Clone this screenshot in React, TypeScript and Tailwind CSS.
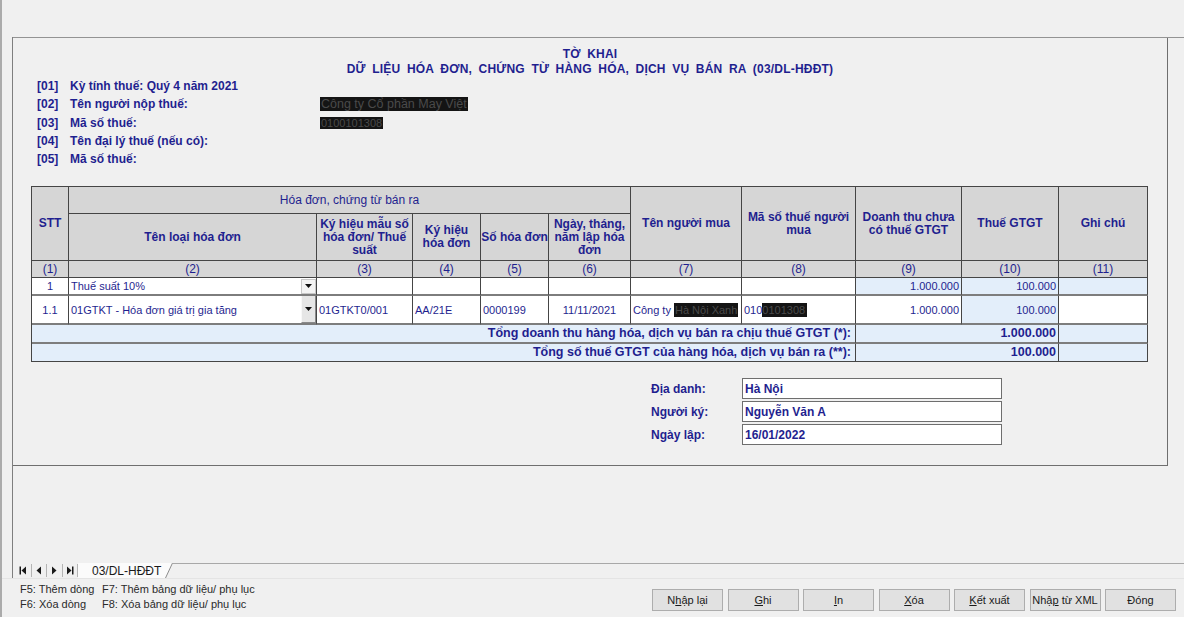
import type { ReactNode } from "react";

const font = "font-['Liberation_Sans',Arial,sans-serif]";

function Redacted({ children, className = "" }: { children: ReactNode; className?: string }) {
  return <span className={`bg-[#141414] text-[#4a4a4a] ${className}`}>{children}</span>;
}

const info: [string, string, ReactNode][] = [
  ["[01]", "Kỳ tính thuế: Quý 4 năm 2021", null],
  [
    "[02]",
    "Tên người nộp thuế:",
    <Redacted className="inline-block h-[14px] leading-[14px] px-[1px] font-normal text-[12.5px]">Công ty Cổ phần May Việt</Redacted>,
  ],
  [
    "[03]",
    "Mã số thuế:",
    <Redacted className="inline-block h-[12px] leading-[12px] text-[11px] font-normal px-[1px]">0100101308</Redacted>,
  ],
  ["[04]", "Tên đại lý thuế (nếu có):", null],
  ["[05]", "Mã số thuế:", null],
];

const base = "border-r border-b border-[#454545] flex items-center overflow-hidden";
const cell = `${base} whitespace-nowrap`;
const head = `${base} bg-[#d6d6d6] justify-center text-center font-bold text-[12px] leading-[13px] px-[2px]`;
const num = `${cell} bg-[#d6d6d6] justify-center`;
const white = `${cell} bg-white`;
const blue = `${cell} bg-[#e3eefa]`;
const rowLine = "border-b-[#7d7d7d] border-b-2";

function Caret() {
  return (
    <svg width="7" height="4" viewBox="0 0 7 4">
      <polygon points="0,0 7,0 3.5,4" fill="#111" />
    </svg>
  );
}

function Dropdown({ tall }: { tall?: boolean }) {
  return (
    <div
      className={`ml-auto w-[15px] shrink-0 flex items-center justify-center ${
        tall
          ? "self-stretch bg-[#e6e6e6] border-l border-[#f8f8f8] border-r border-b border-r-[#8a8a8a] border-b-[#8a8a8a]"
          : "h-[15px] bg-[#f4f4f4] border border-[#c8c8c8]"
      }`}
    >
      <Caret />
    </div>
  );
}

function InvoiceTable() {
  return (
    <div className="ml-[18px] w-[1117px] grid grid-cols-[37px_248px_96px_68px_68px_82px_111px_114px_106px_97px_89px] grid-rows-[27px_47px_17px_18px_29px_19px_18px] border-l border-t border-[#454545] text-[11px] text-[#1f1f8f]">
      <div className={`${head} row-span-2`}>STT</div>
      <div className={`${head} col-span-5 font-normal`}>Hóa đơn, chứng từ bán ra</div>
      <div className={`${head} row-span-2`}>Tên người mua</div>
      <div className={`${head} row-span-2 px-[4px]`}>Mã số thuế người mua</div>
      <div className={`${head} row-span-2 px-[6px]`}>Doanh thu chưa có thuế GTGT</div>
      <div className={`${head} row-span-2`}>Thuế GTGT</div>
      <div className={`${head} row-span-2`}>Ghi chú</div>
      <div className={head}>Tên loại hóa đơn</div>
      <div className={head}>Ký hiệu mẫu số hóa đơn/ Thuế suất</div>
      <div className={`${head} px-[6px]`}>Ký hiệu hóa đơn</div>
      <div className={`${head} px-0 whitespace-nowrap`}>Số hóa đơn</div>
      <div className={head}>Ngày, tháng, năm lập hóa đơn</div>

      {["(1)", "(2)", "(3)", "(4)", "(5)", "(6)", "(7)", "(8)", "(9)", "(10)", "(11)"].map((n) => (
        <div key={n} className={`${num} text-[12px]`}>
          {n}
        </div>
      ))}

      <div className={`${white} ${rowLine} justify-center`}>1</div>
      <div className={`${white} ${rowLine} pl-[2px]`}>
        <span>Thuế suất 10%</span>
        <Dropdown />
      </div>
      {[0, 1, 2, 3, 4, 5].map((i) => (
        <div key={i} className={`${white} ${rowLine}`} />
      ))}
      <div className={`${blue} ${rowLine} justify-end pr-[2px]`}>1.000.000</div>
      <div className={`${blue} ${rowLine} justify-end pr-[2px]`}>100.000</div>
      <div className={`${blue} ${rowLine}`} />

      <div className={`${white} ${rowLine} justify-center`}>1.1</div>
      <div className={`${white} ${rowLine} pl-[2px]`}>
        <span>01GTKT - Hóa đơn giá trị gia tăng</span>
        <Dropdown tall />
      </div>
      <div className={`${white} ${rowLine} pl-[2px]`}>01GTKT0/001</div>
      <div className={`${white} ${rowLine} pl-[2px]`}>AA/21E</div>
      <div className={`${white} ${rowLine} pl-[2px]`}>0000199</div>
      <div className={`${white} ${rowLine} justify-center`}>11/11/2021</div>
      <div className={`${white} ${rowLine} pl-[2px]`}>
        <span>Công ty&nbsp;</span>
        <Redacted className="px-[1px] leading-[14px]">Hà Nội Xanh</Redacted>
      </div>
      <div className={`${white} ${rowLine} pl-[2px]`}>
        <span>010</span>
        <Redacted className="leading-[14px] pr-[2px]">0101308</Redacted>
      </div>
      <div className={`${white} ${rowLine} justify-end pr-[2px]`}>1.000.000</div>
      <div className={`${blue} ${rowLine} justify-end pr-[2px]`}>100.000</div>
      <div className={`${white} ${rowLine}`} />

      <div className={`${blue} ${rowLine} col-span-8 justify-end pr-[4px] font-bold text-[12.5px]`}>
        Tổng doanh thu hàng hóa, dịch vụ bán ra chịu thuế GTGT (*):
      </div>
      <div className={`${blue} ${rowLine} col-span-2 justify-end pr-[2px] font-bold text-[12.5px]`}>1.000.000</div>
      <div className={`${blue} ${rowLine}`} />

      <div className={`${blue} col-span-8 justify-end pr-[4px] font-bold text-[12.5px]`}>
        Tổng số thuế GTGT của hàng hóa, dịch vụ bán ra (**):
      </div>
      <div className={`${blue} col-span-2 justify-end pr-[2px] font-bold text-[12.5px]`}>100.000</div>
      <div className={blue} />
    </div>
  );
}

function Signature() {
  const rows = [
    ["Địa danh:", "Hà Nội"],
    ["Người ký:", "Nguyễn Văn A"],
    ["Ngày lập:", "16/01/2022"],
  ];
  return (
    <div className="mt-[16px] ml-[638px] flex flex-col gap-[2px] text-[12px] text-[#1f1f8f]">
      {rows.map(([label, value]) => (
        <div key={label} className="flex items-center h-[21px]">
          <span className="w-[91px] font-bold">{label}</span>
          <div className="w-[260px] h-[21px] bg-white border border-[#6e6e6e] flex items-center pl-[2px] font-bold">
            {value}
          </div>
        </div>
      ))}
    </div>
  );
}

function NavIcon({ kind }: { kind: "first" | "prev" | "next" | "last" }) {
  return (
    <svg width="8" height="9" viewBox="0 0 8 9">
      {kind === "first" && (
        <>
          <rect x="0.5" y="0.5" width="1.5" height="8" fill="#1a1a1a" />
          <polygon points="7,0.5 2.5,4.5 7,8.5" fill="#1a1a1a" />
        </>
      )}
      {kind === "prev" && <polygon points="6,0.5 1.5,4.5 6,8.5" fill="#1a1a1a" />}
      {kind === "next" && <polygon points="2,0.5 6.5,4.5 2,8.5" fill="#1a1a1a" />}
      {kind === "last" && (
        <>
          <polygon points="1,0.5 5.5,4.5 1,8.5" fill="#1a1a1a" />
          <rect x="6" y="0.5" width="1.5" height="8" fill="#1a1a1a" />
        </>
      )}
    </svg>
  );
}

function TabStrip() {
  const kinds = ["first", "prev", "next", "last"] as const;
  return (
    <div className="h-[15px] flex">
      <div className="flex items-center pl-[3px] w-[65px]">
        {kinds.map((k) => (
          <div key={k} className="w-[16px] h-[13px] flex items-center justify-center border-r border-[#b4b4b4]">
            <NavIcon kind={k} />
          </div>
        ))}
      </div>
      <div className="w-[87px] bg-[#fbfbfb] flex items-center pl-[14px] text-[12px] text-[#1a1a1a] leading-none">
        03/DL-HĐĐT
      </div>
      <svg width="8" height="15" viewBox="0 0 8 15" className="shrink-0">
        <polygon points="0,0 7.5,0 0.5,15 0,15" fill="#fbfbfb" />
        <line x1="7.5" y1="0" x2="0.5" y2="15" stroke="#8c8c8c" strokeWidth="1" />
      </svg>
      <div className="flex-1 border-t border-[#a8a8a8]" />
    </div>
  );
}

const buttons: ReactNode[] = [
  <>N<u>h</u>ập lại</>,
  <><u>G</u>hi</>,
  <><u>I</u>n</>,
  <><u>X</u>óa</>,
  <><u>K</u>ết xuất</>,
  <>Nhậ<u>p</u> từ XML</>,
  <>Đón<u>g</u></>,
];

export default function App() {
  return (
    <div className={`w-[1184px] h-[617px] bg-[#f0f0f0] border-l-2 border-[#ababab] flex flex-col overflow-hidden ${font}`}>
      <div className="h-[37px] shrink-0" />
      <div className="flex-1 ml-[10px] border-l border-[#7f7f7f] flex flex-col">
        <div className="border-t border-[#939393]">
          <div className="w-[1155px] h-[428px] border-r border-b border-[#6f6f6f] flex flex-col text-[#1f1f8f]">
            <div className="pt-[9px] text-center font-bold text-[12px] leading-[15px] tracking-[0.2px] [word-spacing:3px]">
              <div>TỜ KHAI</div>
              <div>DỮ LIỆU HÓA ĐƠN, CHỨNG TỪ HÀNG HÓA, DỊCH VỤ BÁN RA (03/DL-HĐĐT)</div>
            </div>
            <div className="pl-[24px] text-[12px] font-bold">
              {info.map(([code, label, value]) => (
                <div key={code} className="h-[18.25px] flex items-center">
                  <span className="w-[33px]">{code}</span>
                  <span className="w-[250px]">{label}</span>
                  {value}
                </div>
              ))}
            </div>
            <div className="mt-[18px]">
              <InvoiceTable />
            </div>
            <Signature />
          </div>
        </div>
        <div className="flex-1" />
        <TabStrip />
      </div>
      <div className="h-[39px] shrink-0 flex border-t border-[#e4e4e4] text-[11px] text-[#2a2a2a]">
        <div className="pl-[18px] pt-[3px] flex leading-[15px]">
          <div className="w-[82px]">
            <div>F5: Thêm dòng</div>
            <div>F6: Xóa dòng</div>
          </div>
          <div>
            <div>F7: Thêm bảng dữ liệu/ phụ lục</div>
            <div>F8: Xóa bảng dữ liệu/ phụ lục</div>
          </div>
        </div>
        <div className="ml-auto mr-[8px] pt-[10px] flex gap-[4.5px]">
          {buttons.map((b, i) => (
            <div
              key={i}
              className="w-[71px] h-[22px] bg-[#e1e1e1] border border-[#adadad] flex items-center justify-center text-[11px] text-[#1a1a1a]"
            >
              <span>{b}</span>
            </div>
          ))}
        </div>
      </div>
    </div>
  );
}
